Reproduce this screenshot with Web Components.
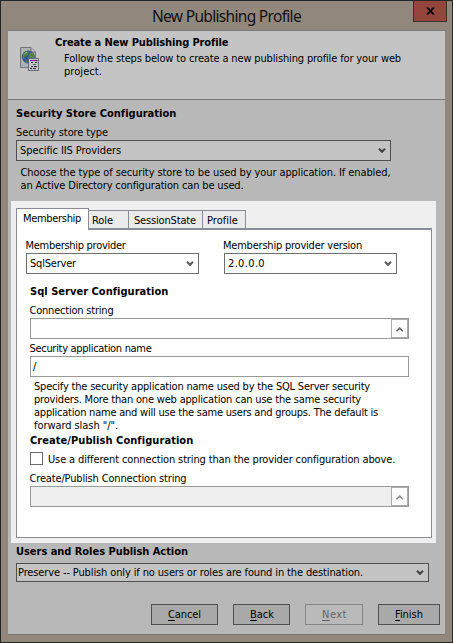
<!DOCTYPE html>
<html lang="en"><head><meta charset="utf-8"><title>New Publishing Profile</title>
<style>html,body{margin:0;width:453px;height:643px;overflow:hidden}</style></head><body>
<publish-dialog></publish-dialog>
<script>
const define = (name, html, setup) => customElements.define(name, class extends HTMLElement {
  connectedCallback() {
    if (this.shadowRoot) return;
    this.attachShadow({mode: 'open'}).innerHTML = html;
    if (setup) setup(this, this.shadowRoot);
  }
});

// One line of text, tracked so that it spans the width in its "w" attribute.
define('ui-text', `<style>
:host{display:block;height:13px;line-height:13px;white-space:pre;flex:none}
:host([bold]){font-weight:bold}
span{display:inline-block}
</style><span><slot></slot></span>`, (el, root) => {
  const s = root.querySelector('span'), w = +el.getAttribute('w'), n = el.textContent.length;
  if (w) s.style.letterSpacing = ((w - s.getBoundingClientRect().width) / n) + 'px';
});

define('ui-select', `<style>
:host{display:flex;box-sizing:border-box;height:21px;border:1px solid var(--line,#6f6f6f);background:var(--face,#fff);align-items:center;padding:0 4px 0 3px;justify-content:space-between;flex:none}
svg{display:block}
</style><slot></slot><svg width="8" height="8" viewBox="0 0 8 8"><path d="M1 1.800 4 4.800 7 1.800" fill="none" stroke="var(--arrow,#5c5c5c)" stroke-width="2.1"/></svg>`);

define('ui-field', `<style>
:host{display:flex;box-sizing:border-box;width:379px;height:21px;border:1px solid #999;background:#fff;align-items:center;justify-content:space-between;padding-left:2px;flex:none}
:host([disabled]){background:#efefef}
b{display:none;box-sizing:border-box;width:17px;height:19px;border:1px solid #acacac;background:#fff}
:host([more]) b{display:block}
svg{display:block}
:host([disabled]) path{stroke:#8b8b8b}
</style><slot><i></i></slot><b><svg width="15" height="17"><path d="M4.500 11.300 7.700 8.100 10.900 11.300" fill="none" stroke="#606060" stroke-width="1.6"/></svg></b>`);

define('ui-button', `<style>
:host{display:flex;box-sizing:border-box;height:21px;border:1px solid #505050;background:#a9a9a9;padding:3px 0 0 16px;flex:none}
:host([disabled]){border-color:#858585;background:#bababa;color:#626262}
</style><slot></slot>`);

define('ui-tab', `<style>
:host{display:block;box-sizing:border-box;height:18px;border:1px solid #898c95;border-bottom:0;border-left:0;background:#ebebeb;padding:3px 0 0 3px;margin-top:2px;flex:none}
:host([active]){height:22px;margin:0 0 -2px;border-left:1px solid #898c95;background:#fff;padding:3px 0 0 6px;position:relative}
</style><slot></slot>`);

define('ui-check', `<style>
:host{display:flex;align-items:flex-start;gap:5px;height:13px;flex:none}
i{box-sizing:border-box;width:13px;height:13px;border:1px solid #6c6c6c;background:#fff}
.t{margin-top:1px}
</style><i></i><div class="t"><slot></slot></div>`);

define('page-icon', `<style>:host{display:block;width:20px;height:25px}svg{display:block}</style>
<svg width="20" height="25" viewBox="0 0 20 25">
<path d="M.5.5H11l4.5 4.5v15.500H.5z" fill="#aeb1b6" stroke="#747579"/><path d="M11 .5V5h4.5" fill="#bbbdc0" stroke="#747579"/>
<circle cx="8.300" cy="10" r="6.500" fill="#345a97"/><path d="M3 6.500 6 4l3 1-1 3-3 1-1 3-1.500-2zM10 6l3-1 1.500 4-2 4-3-1-1-3zM5 13l3 1-1 2z" fill="#558344"/><path d="M4.500 7 7 5" stroke="#90ae99"/>
<path d="M8.500 11.500h10v12h-10z" fill="#c4c5cd" stroke="#66677b"/>
<path d="M10 13.500h6" stroke="#8a158f"/><path d="M16 13.500h1.500M11 19.500h2M14 19.500h3M10 21.500h2M13 21.500h3" stroke="#24242a"/><path d="M11 15.500h2M15 15.500h2" stroke="#272731"/><path d="M13 17.500h3" stroke="#28823d"/>
</svg>`);

define('publish-dialog', `<style>
:host{display:flex;flex-direction:column;box-sizing:border-box;width:453px;height:643px;border:1px solid #252525;background:#92877c;padding:0 7px 7px;font:11px/13px "DejaVu Sans Condensed","DejaVu Sans",sans-serif;font-stretch:condensed;color:#000}
*{box-sizing:border-box}
.col{display:flex;flex-direction:column;align-items:flex-start}
.title{display:flex;height:29px;flex:none;justify-content:space-between;padding-left:144px;margin-right:-2px}
.title ui-text{font:15.5px/20px "Noto Sans",sans-serif;height:20px;margin-top:5px;color:#111}
.close{width:34px;height:21px;background:#94453c;border:1px solid #40302c;border-top:0;display:flex;align-items:center;justify-content:center}
.head{height:70px;flex:none;background:#c4c4c4;border:solid #777b7e;border-width:1px 0;display:flex;padding:5px 0 0 12px}
.head page-icon{margin-top:11px}
.head .col{margin-left:15px}
.body{flex:1;background:#b8b8b8;border-bottom:1px solid #77746f;padding:7px 0 0 8px;--face:#c4c4c4;--line:#4f4f4f;--arrow:#424242}
.panel{width:425px;height:342px;margin:9px 0 0 -5px;background:#efefef;padding:7px 4px 5px 5px;--face:#fff;--line:#6f6f6f;--arrow:#5c5c5c;flex:none}
.tabs{display:flex;height:20px;flex:none}
.page{width:416px;height:310px;background:#fff;border:1px solid #898c95;border-top-width:2px;padding:9px 0 0 13px}
.pair{display:flex;gap:25px;margin-left:-4px}
.buttons{display:flex;margin:22px 0 0 135px}
u{text-underline-offset:2px;text-decoration-thickness:1px;text-decoration-skip-ink:none}
</style>
<div class="title"><ui-text w="149">New Publishing Profile</ui-text><div class="close"><svg width="9" height="8" viewBox="0 0 10 9"><path d="M0 .5h3L5 3 7 .5h3L6.500 4.500 10 8.500H7L5 6 3 8.500H0l3.500-4z" fill="#090909"/></svg></div></div>
<div class="head"><page-icon></page-icon><div class="col">
 <ui-text bold w="173">Create a New Publishing Profile</ui-text>
 <ui-text w="337" style="margin:3px 0 0 9px">Follow the steps below to create a new publishing profile for your web</ui-text>
 <ui-text w="38" style="margin-left:9px">project.</ui-text></div></div>
<div class="body col">
 <ui-text bold w="160">Security Store Configuration</ui-text>
 <ui-text w="92" style="margin-top:6px">Security store type</ui-text>
 <ui-select style="width:375px;margin-top:1px"><ui-text w="101">Specific IIS Providers</ui-text></ui-select>
 <ui-text w="370" style="margin:5px 0 0 4.5px">Choose the type of security store to be used by your application. If enabled,</ui-text>
 <ui-text w="223" style="margin-left:4.5px">an Active Directory configuration can be used.</ui-text>
 <div class="panel col">
  <div class="tabs"><ui-tab active style="width:73px"><ui-text w="58">Membership</ui-text></ui-tab><ui-tab style="width:40px"><ui-text w="21">Role</ui-text></ui-tab><ui-tab style="width:74px;padding-left:5px"><ui-text w="62">SessionState</ui-text></ui-tab><ui-tab style="width:43px;padding-left:4px"><ui-text w="31">Profile</ui-text></ui-tab></div>
  <div class="page col">
   <div class="pair">
    <div class="col"><ui-text w="100" style="margin-left:-.5px">Membership provider</ui-text><ui-select style="width:173px;margin-top:1px"><ui-text w="46">SqlServer</ui-text></ui-select></div>
    <div class="col"><ui-text w="139" style="margin-left:-1px">Membership provider version</ui-text><ui-select style="width:173px;margin-top:1px"><ui-text w="37">2.0.0.0</ui-text></ui-select></div>
   </div>
   <ui-text bold w="138" style="margin-top:11px">Sql Server Configuration</ui-text>
   <ui-text w="84" style="margin-top:6px;margin-left:-.5px">Connection string</ui-text>
   <ui-field more style="margin-top:1px"></ui-field>
   <ui-text w="122" style="margin-top:3px;margin-left:-.5px">Security application name</ui-text>
   <ui-field style="margin-top:1px"><ui-text w="5">/</ui-text></ui-field>
   <div style="margin:3px 0 0 4px">
    <ui-text w="336">Specify the security application name used by the SQL Server security</ui-text>
    <ui-text w="327">providers. More than one web application can use the same security</ui-text>
    <ui-text w="344">application name and will use the same users and groups. The default is</ui-text>
    <ui-text w="84">forward slash "/".</ui-text>
   </div>
   <ui-text bold w="163" style="margin-top:2px">Create/Publish Configuration</ui-text>
   <ui-check style="margin-top:5px"><ui-text w="347">Use a different connection string than the provider configuration above.</ui-text></ui-check>
   <ui-text w="157" style="margin-top:7px;margin-left:-.5px">Create/Publish Connection string</ui-text>
   <ui-field more disabled style="margin-top:1px"></ui-field>
  </div>
 </div>
 <ui-text bold w="172" style="margin-top:2px">Users and Roles Publish Action</ui-text>
 <ui-select style="width:413px;height:19px;margin-top:5px;padding-left:1px"><ui-text w="345">Preserve -- Publish only if no users or roles are found in the destination.</ui-text></ui-select>
 <div class="buttons">
  <ui-button style="width:67px"><ui-text w="33"><u>C</u>ancel</ui-text></ui-button>
  <ui-button style="width:57px;margin-left:15px"><ui-text w="24"><u>B</u>ack</ui-text></ui-button>
  <ui-button disabled style="width:58px;margin-left:15px"><ui-text w="25"><u>N</u>ext</ui-text></ui-button>
  <ui-button style="width:62px;margin-left:15px"><ui-text w="28"><u>F</u>inish</ui-text></ui-button>
 </div>
</div>`);
</script></body></html>
